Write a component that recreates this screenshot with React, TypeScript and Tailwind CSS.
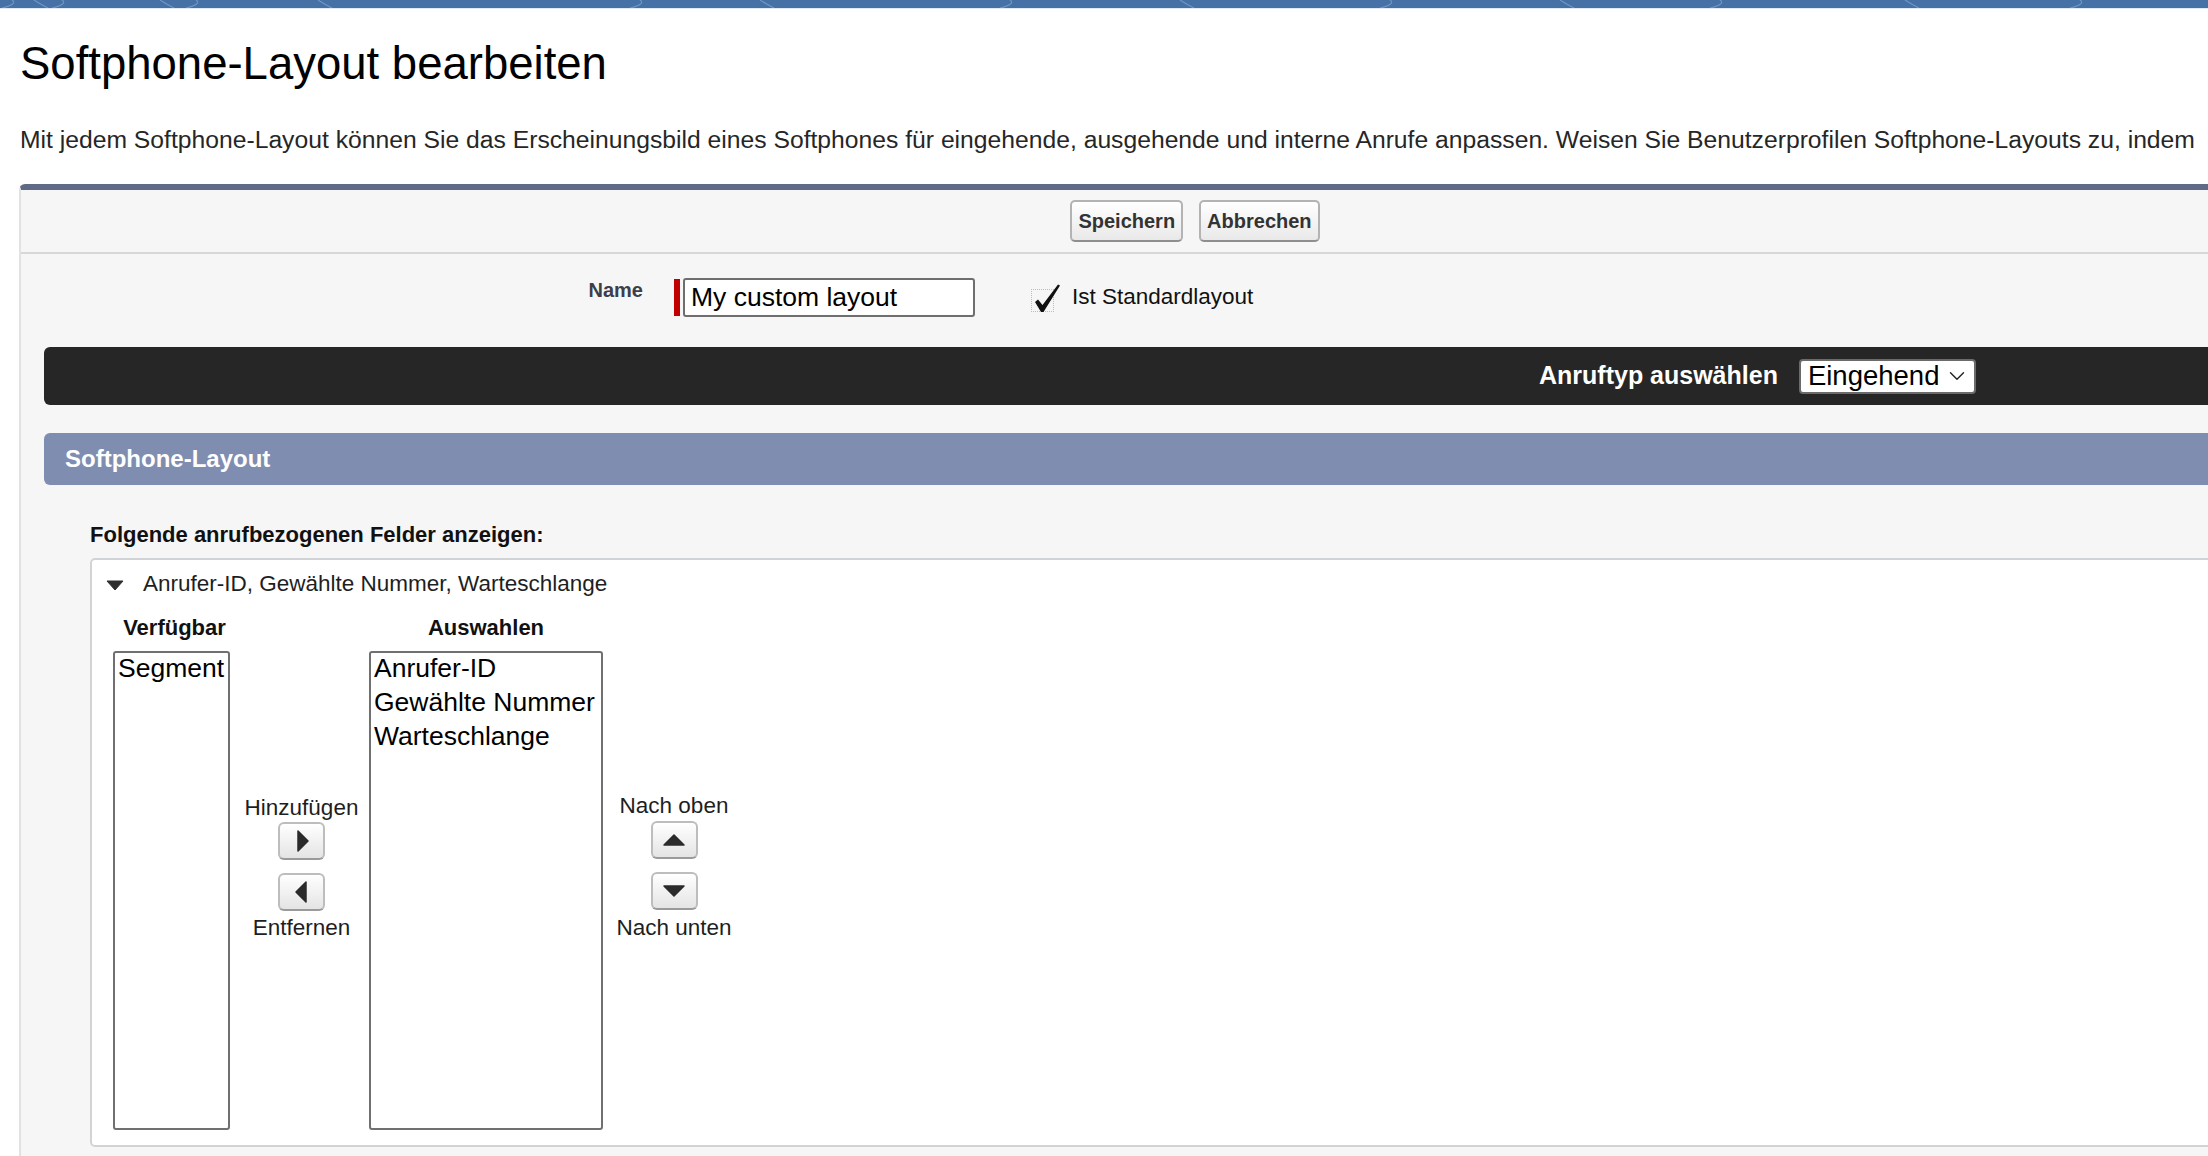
import { ChevronDown } from 'lucide-react'

const available = ['Segment']
const selected = ['Anrufer-ID', 'Gewählte Nummer', 'Warteschlange']

function TopBar() {
  return (
    <div className="h-[9px] bg-[#4571a7] border-b border-[#dfe9f4] overflow-hidden">
      <svg width="2208" height="8" viewBox="0 0 2208 8" className="block">
        {[12, 34, 62, 160, 196, 318, 640, 760, 1010, 1180, 1390, 1560, 1720, 1905, 2080].map((x, i) => (
          <path
            key={i}
            d={`M${x} 0 Q${x + 6} 4 ${x + (i % 2 ? 14 : -10)} 8`}
            stroke="#a9c2e0"
            strokeOpacity="0.45"
            strokeWidth="1.2"
            fill="none"
          />
        ))}
      </svg>
    </div>
  )
}

function GrayButton({ label }: { label: string }) {
  return (
    <button className="h-[42px] px-[6px] rounded-[5px] border-2 border-[#b3b3b3] border-b-[#8e8e8e] bg-gradient-to-b from-white to-[#e9e9e9] text-[20px] font-bold text-[#333] leading-none">
      {label}
    </button>
  )
}

function ArrowButton({ dir }: { dir: 'left' | 'right' | 'up' | 'down' }) {
  const pts = {
    right: '8,2 18,12 8,22',
    left: '16,2 6,12 16,22',
    up: '2,17 12,7 22,17',
    down: '2,7 12,17 22,7',
  }[dir]
  return (
    <button className="w-[47px] h-[38px] rounded-[6px] border-2 border-[#bdbdbd] border-b-[#9a9a9a] bg-gradient-to-b from-white to-[#e4e4e4] flex items-center justify-center">
      <svg width="24" height="24" viewBox="0 0 24 24">
        <polygon points={pts} fill="#2b2b2b" stroke="#2b2b2b" strokeWidth="1.5" strokeLinejoin="round" />
      </svg>
    </button>
  )
}

function ListBox({ items, width }: { items: string[]; width: string }) {
  return (
    <div className={`${width} h-[479px] bg-white border-2 border-[#707070] rounded-[3px] px-[3px] text-[26.5px] leading-[34px] text-black`}>
      <div className="-mt-[2px]">
        {items.map(it => (
          <div key={it} className="whitespace-nowrap">{it}</div>
        ))}
      </div>
    </div>
  )
}

export default function App() {
  return (
    <div className="w-[2208px] h-[1156px] overflow-hidden bg-white font-['Liberation_Sans',Arial,sans-serif]">
      <TopBar />

      <div className="w-[2400px] pl-[20px]">
        <h1 className="mt-[29px] text-[45.5px] leading-[52px] font-normal text-black">Softphone-Layout bearbeiten</h1>
        <p className="mt-[36px] text-[24.7px] leading-[28px] text-[#262626] whitespace-nowrap">
          Mit jedem Softphone-Layout können Sie das Erscheinungsbild eines Softphones für eingehende, ausgehende und interne Anrufe anpassen. Weisen Sie Benutzerprofilen Softphone-Layouts zu, indem
        </p>

        {/* Edit panel */}
        <div className="mt-[30px] -ml-[1px] w-[2350px] border-t-[6px] border-t-[#5f6a86] border-l-2 border-l-[#e2e2e2] rounded-tl-[6px] bg-[#f6f6f6] pb-[40px]">
          <div className="h-[64px] flex items-center justify-center gap-[16px] border-b-2 border-[#d7d7d7]">
            <GrayButton label="Speichern" />
            <GrayButton label="Abbrechen" />
          </div>

          {/* Name row */}
          <div className="flex items-start pt-[24px]">
            <div className="w-[622px] text-right text-[20px] leading-[24px] font-bold text-[#3e3e4a]">Name</div>
            <div className="ml-[31px] mt-[1px] w-[6px] h-[37px] bg-[#c00000]" />
            <div className="ml-[3px] w-[292px] h-[39px] bg-white border-2 border-[#6e6e6e] rounded-[3px] px-[6px] text-[26.5px] leading-[35px] text-black">
              My custom layout
            </div>
            <div className="ml-[56px] mt-[5px] relative w-[30px] h-[30px]">
              <div className="absolute left-0 top-[6px] w-[23px] h-[23px] border border-dotted border-[#bdbdbd]" />
              <svg width="30" height="30" viewBox="0 0 30 30" className="absolute left-0 top-0">
                <polygon points="4,19 7,16.5 11.5,22 27,1.5 29,2.5 12.5,29 10,29" fill="#111" />
              </svg>
            </div>
            <div className="ml-[11px] mt-[6px] text-[22.5px] leading-[26px] text-[#111]">Ist Standardlayout</div>
          </div>

          {/* Call type bar */}
          <div className="mt-[30px] ml-[23px] h-[58px] rounded-l-[6px] bg-[#262626] flex items-center pl-[1495px]">
            <span className="text-[25px] font-bold text-white whitespace-nowrap">Anruftyp auswählen</span>
            <div className="ml-[21px] w-[177px] h-[35px] bg-white border-2 border-[#6b6b6b] rounded-[4px] flex items-center justify-between pl-[7px] pr-[4px]">
              <span className="text-[27.5px] leading-none text-black">Eingehend</span>
              <ChevronDown className="w-[26px] h-[26px] text-[#222]" strokeWidth={1.3} />
            </div>
          </div>

          {/* Section header */}
          <div className="mt-[28px] ml-[23px] h-[52px] rounded-l-[6px] bg-[#7f8db0] flex items-center pl-[21px]">
            <span className="text-[24px] font-bold text-white">Softphone-Layout</span>
          </div>

          <div className="mt-[37px] ml-[69px] text-[22px] leading-[26px] font-bold text-[#111]">
            Folgende anrufbezogenen Felder anzeigen:
          </div>

          {/* Field box */}
          <div className="mt-[10px] ml-[69px] bg-white border-2 border-[#d0d4d7] rounded-[5px] pt-[11px] pb-[15px]">
            <div className="flex items-center pl-[13px] h-[26px]">
              <svg width="20" height="14" viewBox="0 0 20 14">
                <polygon points="2,4 18,4 10,13" fill="#2e2e2e" stroke="#2e2e2e" strokeWidth="1" strokeLinejoin="round" />
              </svg>
              <span className="ml-[18px] text-[22.5px] leading-[26px] text-[#1e1e1e]">Anrufer-ID, Gewählte Nummer, Warteschlange</span>
            </div>

            <div className="flex pl-[21px] mt-[18px]">
              <div className="w-[117px] flex flex-col items-center">
                <div className="h-[26px] text-[22px] leading-[26px] font-bold text-[#111] whitespace-nowrap pl-[6px]">Verfügbar</div>
                <div className="mt-[10px]">
                  <ListBox items={available} width="w-[117px]" />
                </div>
              </div>

              <div className="w-[139px] flex flex-col items-center pt-[180px] text-[22.5px] leading-[26px] text-[#1e1e1e]">
                <div className="pl-[4px]">Hinzufügen</div>
                <div className="mt-[1px] pl-[4px]"><ArrowButton dir="right" /></div>
                <div className="mt-[13px] pl-[4px]"><ArrowButton dir="left" /></div>
                <div className="mt-[4px] pl-[4px]">Entfernen</div>
              </div>

              <div className="w-[234px] flex flex-col items-center">
                <div className="h-[26px] text-[22px] leading-[26px] font-bold text-[#111]">Auswahlen</div>
                <div className="mt-[10px]">
                  <ListBox items={selected} width="w-[234px]" />
                </div>
              </div>

              <div className="w-[142px] flex flex-col items-center pt-[178px] text-[22.5px] leading-[26px] text-[#1e1e1e]">
                <div className="whitespace-nowrap">Nach oben</div>
                <div className="mt-[2px]"><ArrowButton dir="up" /></div>
                <div className="mt-[13px]"><ArrowButton dir="down" /></div>
                <div className="mt-[5px] whitespace-nowrap">Nach unten</div>
              </div>
            </div>
          </div>
        </div>
      </div>
    </div>
  )
}
